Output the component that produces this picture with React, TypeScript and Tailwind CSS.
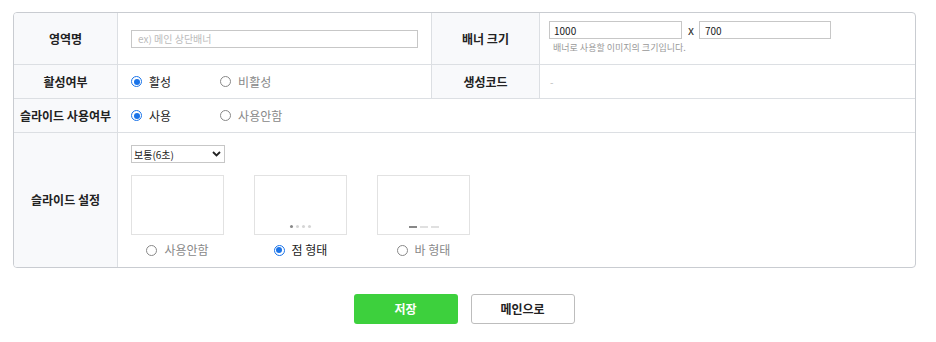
import { useState } from 'react';

const font = { fontFamily: '"Noto Sans CJK KR", "Noto Sans", sans-serif' };

function Radio({ checked, label, onClick }: { checked: boolean; label: string; onClick?: () => void }) {
  return (
    <label onClick={onClick} className="flex items-center gap-[7px] cursor-pointer">
      <span
        className={`w-[11px] h-[11px] rounded-full border flex items-center justify-center ${checked ? 'border-[#1a73e8]' : 'border-[#888]'}`}
      >
        {checked && <span className="w-[6px] h-[6px] rounded-full bg-[#1a73e8]" />}
      </span>
      <span className={`text-[12px] ${checked ? 'text-[#222]' : 'text-[#888]'}`}>{label}</span>
    </label>
  );
}

const labelCell = 'bg-[#f8f9fb] flex items-center justify-center text-[12px] font-bold text-[#222] border-[#dcdfe3]';

export default function App() {
  const [active, setActive] = useState(true);
  const [slideUse, setSlideUse] = useState(true);
  const [slideType, setSlideType] = useState('dot');

  return (
    <div className="w-[936px] h-[342px] bg-white pt-[12px]" style={font}>
      <div className="mx-[13px] w-[903px] border border-[#c9ccd1] rounded-[4px] overflow-hidden grid grid-cols-[104px_314px_108px_1fr]">
        {/* row 1 */}
        <div className={`${labelCell} h-[52px] border-r border-b`}>영역명</div>
        <div className="h-[52px] border-r border-b border-[#dcdfe3] flex items-center px-[13px]">
          <input
            placeholder="ex) 메인 상단배너"
            className="w-[289px] h-[18px] border border-[#c7c7c7] px-[6px] text-[10px] text-[#333] placeholder:text-[#bbb] outline-none"
          />
        </div>
        <div className={`${labelCell} h-[52px] border-r border-b`}>배너 크기</div>
        <div className="h-[52px] border-b border-[#dcdfe3] px-[9px] pt-[8px]">
          <div className="flex items-center">
            <input defaultValue="1000" className="w-[133px] h-[18px] border border-[#c7c7c7] px-[4px] text-[10px] text-[#222] outline-none" />
            <span className="ml-[6px] mr-[5px] text-[12px] text-[#333]">x</span>
            <input defaultValue="700" className="w-[132px] h-[18px] border border-[#c7c7c7] px-[5px] text-[10px] text-[#222] outline-none" />
          </div>
          <div className="mt-[2px] ml-[4px] text-[9px] text-[#999]">배너로 사용할 이미지의 크기입니다.</div>
        </div>

        {/* row 2 */}
        <div className={`${labelCell} h-[34px] border-r border-b`}>활성여부</div>
        <div className="h-[34px] border-r border-b border-[#dcdfe3] flex items-center px-[13px] gap-[49px]">
          <Radio checked={active} label="활성" onClick={() => setActive(true)} />
          <Radio checked={!active} label="비활성" onClick={() => setActive(false)} />
        </div>
        <div className={`${labelCell} h-[34px] border-r border-b`}>생성코드</div>
        <div className="h-[34px] border-b border-[#dcdfe3] flex items-center px-[10px] text-[10px] text-[#bbb]">-</div>

        {/* row 3 */}
        <div className={`${labelCell} h-[34px] border-r border-b`}>슬라이드 사용여부</div>
        <div className="col-span-3 h-[34px] border-b border-[#dcdfe3] flex items-center px-[13px] gap-[49px]">
          <Radio checked={slideUse} label="사용" onClick={() => setSlideUse(true)} />
          <Radio checked={!slideUse} label="사용안함" onClick={() => setSlideUse(false)} />
        </div>

        {/* row 4 */}
        <div className={`${labelCell} h-[134px] border-r`}>슬라이드 설정</div>
        <div className="col-span-3 h-[134px] px-[13px] pt-[12px]">
          <div className="w-[94px] h-[18px] border border-[#c7c7c7] flex items-center justify-between px-[2px] text-[10px] text-[#222]">
            <span>보통(6초)</span>
            <svg width="9" height="6" viewBox="0 0 9 6" className="mr-[1px]">
              <path d="M1 1l3.5 3.5L8 1" fill="none" stroke="#222" strokeWidth="1.8" />
            </svg>
          </div>
          <div className="flex gap-[30px] mt-[12px]">
            {[
              { key: 'none', label: '사용안함' },
              { key: 'dot', label: '점 형태' },
              { key: 'bar', label: '바 형태' },
            ].map((o) => (
              <div key={o.key} className="w-[93px] flex flex-col items-center">
                <div className="w-[93px] h-[60px] border border-[#e2e2e2] flex items-end justify-center pb-[6px]">
                  {o.key === 'dot' && (
                    <div className="flex gap-[3px]">
                      <span className="w-[3px] h-[3px] rounded-full bg-[#888]" />
                      <span className="w-[3px] h-[3px] rounded-full bg-[#d5d5d5]" />
                      <span className="w-[3px] h-[3px] rounded-full bg-[#d5d5d5]" />
                      <span className="w-[3px] h-[3px] rounded-full bg-[#d5d5d5]" />
                    </div>
                  )}
                  {o.key === 'bar' && (
                    <div className="flex gap-[3px]">
                      <span className="w-[8px] h-[2px] bg-[#888]" />
                      <span className="w-[8px] h-[2px] bg-[#e0e0e0]" />
                      <span className="w-[8px] h-[2px] bg-[#e0e0e0]" />
                    </div>
                  )}
                </div>
                <div className="mt-[6px]">
                  <Radio checked={slideType === o.key} label={o.label} onClick={() => setSlideType(o.key)} />
                </div>
              </div>
            ))}
          </div>
        </div>
      </div>

      <div className="flex justify-center gap-[13px] mt-[26px] ml-[-8px]">
        <button className="w-[104px] h-[30px] rounded-[3px] bg-[#3dd03d] text-white text-[12px] font-bold">저장</button>
        <button className="w-[104px] h-[30px] rounded-[3px] border border-[#bdbdbd] bg-white text-[#222] text-[12px] font-bold">메인으로</button>
      </div>
    </div>
  );
}
